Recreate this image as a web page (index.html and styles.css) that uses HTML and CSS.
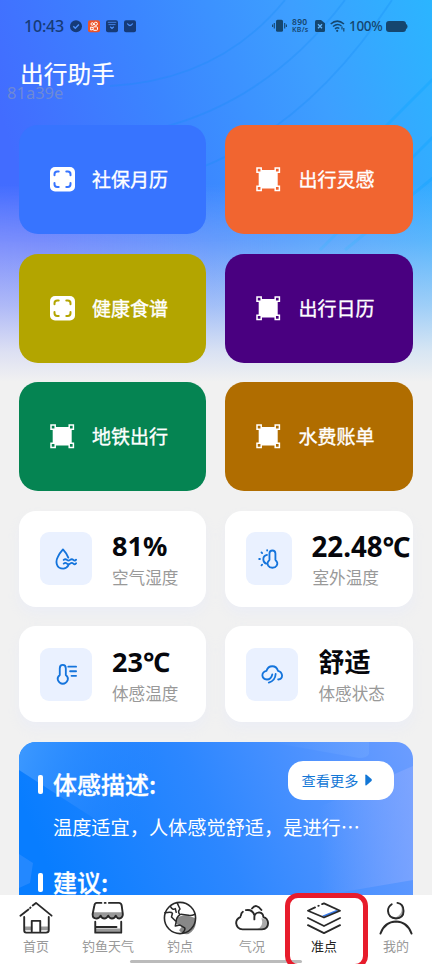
FILE: index.html
```html
<!DOCTYPE html>
<html lang="zh-CN">
<head>
<meta charset="utf-8">
<title>出行助手</title>
<link rel="stylesheet" href="styles.css">
</head>
<body>
<svg width="0" height="0" class="defs">
  <symbol id="scan" viewBox="0 0 25 25">
    <rect x="0" y="0" width="25" height="24.5" rx="5" fill="#fff"/>
    <path d="M4.5 8.2V7.2Q4.500 4.500 7.200 4.500H8.700M16.300 4.500h1.500q2.700 0 2.700 2.700V8.200M20.500 16v1.300q0 2.700-2.700 2.700H16.300M8.700 20H7.200Q4.500 20 4.500 17.300V16" fill="none" stroke="currentColor" stroke-width="2" stroke-linecap="round"/>
  </symbol>
  <symbol id="frame" viewBox="0 0 25 25">
    <rect x="2.700" y="3" width="19" height="18.500" fill="#fff"/>
    <g fill="currentColor" stroke="#fff" stroke-width="1.500"><path d="M1 1h4.200v4.200h-4.200zM19.200 1h4.200v4.200h-4.200zM1 19.200h4.200v4.200h-4.200zM19.200 19.200h4.200v4.200h-4.200z"/></g>
  </symbol>
</svg>
<div class="app">
  <svg class="backdrop" viewBox="0 0 432 382">
    <defs>
      <linearGradient id="sky" x1="0" y1="0.300" x2="1" y2="0">
        <stop offset="0" stop-color="#426cff"/><stop offset=".35" stop-color="#3b85ff"/><stop offset=".7" stop-color="#3d9fff"/><stop offset="1" stop-color="#2bb5ff"/>
      </linearGradient>
      <linearGradient id="fade" x1="0" y1="0" x2="0" y2="1">
        <stop offset=".48" stop-color="#f1f1f1" stop-opacity="0"/><stop offset=".63" stop-color="#f1f1f1" stop-opacity=".2"/><stop offset=".8" stop-color="#f1f1f1" stop-opacity=".55"/><stop offset=".92" stop-color="#f1f1f1" stop-opacity=".86"/><stop offset="1" stop-color="#f1f1f1"/>
      </linearGradient>
      <linearGradient id="violet" x1="0" y1="0" x2="1" y2="0"><stop offset="0" stop-color="#a18cff" stop-opacity=".3"/><stop offset="1" stop-color="#a18cff" stop-opacity="0"/></linearGradient>
      <linearGradient id="down" x1="0" y1="0" x2="0" y2="1"><stop offset="0" stop-color="#000"/><stop offset=".3" stop-color="#fff"/></linearGradient>
      <mask id="m"><rect y="185" width="300" height="197" fill="url(#down)"/></mask>
    </defs>
    <rect width="432" height="382" fill="url(#sky)"/>
    <g fill="none" stroke="#168cf5" stroke-opacity=".3" stroke-width="1.800">
      <path d="M110 86Q220 80 285 0M160 128Q270 100 345 0M200 168Q310 125 392 0"/>
      <path d="M380 132L440 72M320 250L440 130M345 250L440 172" stroke="#08a2ff" stroke-width="3"/>
    </g>
    <rect y="185" width="300" height="197" fill="url(#violet)" mask="url(#m)"/>
    <rect width="432" height="382" fill="url(#fade)"/>
  </svg>

  <header class="status">
    <span class="clock">10:43</span>
    <svg class="status-left" width="66" height="13" viewBox="0 0 66 13">
      <circle cx="6" cy="6.300" r="6" fill="#163b78"/><path d="M3.300 6.200l2 2 3.600-3.600" stroke="#4b91ff" stroke-width="1.400" fill="none"/>
      <rect x="18" y=".3" width="12" height="12" rx="2" fill="#ed5428"/>
      <g fill="none" stroke="#fff" stroke-width="1"><circle cx="22.300" cy="4" r="1.300"/><circle cx="25.800" cy="3.800" r="1.600"/><rect x="23.200" y="6.800" width="4.300" height="3.500" rx=".8"/><path d="M23 7.500l-2.300-.5v3l2.300-.5"/></g>
      <rect x="36" y=".3" width="12" height="12" rx="2" fill="#163b78"/><path d="M37.800 2.300h8.500M38.500 4.600h7" stroke="#4b91ff" stroke-width=".8"/><path d="M40.200 6.800l1.800 1.600 1.800-1.600" stroke="#4b91ff" stroke-width="1.200" fill="none"/>
      <rect x="54" y=".3" width="12" height="12" rx="2" fill="#163b78"/><path d="M57.300 3.500q2.700 4 5.400 0" stroke="#4b91ff" stroke-width="1.300" fill="none"/>
    </svg>
    <div class="status-right">
      <svg width="15" height="14" viewBox="0 0 15 14"><rect x="4" y=".7" width="7" height="12" rx="1.500" fill="#15466f"/><path d="M2.300 4v5.500M.6 5.500v2.500M12.700 4v5.500M14.400 5.500v2.500" stroke="#15466f" stroke-width="1.100"/></svg>
      <span class="speed"><span>890</span><span class="unit">KB/s</span></span>
      <svg class="sim" width="10" height="12" viewBox="0 0 10 12"><path d="M1.500 0H6L10 3.300V10.500Q10 12 8.500 12h-7Q0 12 0 10.500v-9Q0 0 1.500 0z" fill="#15466f"/><path d="M3 4.300l4 4M7 4.300l-4 4" stroke="#62b6ff" stroke-width="1.300"/></svg>
      <svg class="wifi" width="15" height="12" viewBox="0 0 15 12"><path d="M.7 4Q7.300-1.800 14 4M3 6.500Q7.500 2.800 11.500 6M5 8.900Q7.300 7 9.300 8.500" fill="none" stroke="#15466f" stroke-width="1.500"/><circle cx="7.200" cy="10.800" r="1.100" fill="#15466f"/><path d="M12 6.500v3M13.800 8v3.500" stroke="#15466f" stroke-width="1.200"/></svg>
      <span class="percent">100%</span>
      <svg class="battery" width="22" height="11" viewBox="0 0 22 11"><rect width="20" height="11" rx="3" fill="#15466f"/><path d="M20 3q1.500.3 1.500 2.500T20 8z" fill="#15466f"/></svg>
    </div>
  </header>
  <h1 class="title">出行助手</h1>
  <span class="watermark">81a39e</span>

  <main class="content">
    <section class="grid tiles">
      <a class="tile blue"><svg><use href="#scan"/></svg><span>社保月历</span></a>
      <a class="tile orange"><svg><use href="#frame"/></svg><span>出行灵感</span></a>
      <a class="tile olive"><svg><use href="#scan"/></svg><span>健康食谱</span></a>
      <a class="tile indigo"><svg><use href="#frame"/></svg><span>出行日历</span></a>
      <a class="tile green"><svg><use href="#frame"/></svg><span>地铁出行</span></a>
      <a class="tile brown"><svg><use href="#frame"/></svg><span>水费账单</span></a>
    </section>
    <section class="grid stats">
      <div class="stat">
        <div class="badge"><svg viewBox="0 0 24 24"><path d="M14.500 19.200Q12.500 22.500 9 22.500C1 22.500 .5 14.500 3 10Q5 5.500 8.700 1.500Q12.500 5.500 14.500 10.500"/><path d="M9.500 13q1.800-1.600 3.500 0t3.500 0 3.500 0 3-.3M9.500 17q1.800-1.600 3.500 0t3.500 0 3.500 0 3-.3"/></svg></div>
        <div class="reading"><strong>81%</strong><span>空气湿度</span></div>
      </div>
      <div class="stat">
        <div class="badge narrow"><svg viewBox="0 0 24 24"><path d="M12.500 13V6q0-3.300 3.200-3.300T19 6v7q3.200 3 1.500 6-1.600 2.500-4.800 2.500T11 19q-1.700-3 1.500-6zM9.800 7.500q-4 1-4 4.700 0 3.500 3 4.800"/><path d="M10 2.300v.5M3.800 4.800L4.500 5.500M1.300 12h.8M3.800 18.900L4.500 18.200"/></svg></div>
        <div class="reading"><strong class="long">22.48℃</strong><span>室外温度</span></div>
      </div>
      <div class="stat">
        <div class="badge"><svg viewBox="0 0 24 24"><path d="M5.200 13V6q0-3.900 3.300-3.900T11.800 6v7q3.200 2.500 2 5.700Q12.200 22.600 8.500 22.600T3.200 18.700Q2 15.500 5.200 13zM14.500 4h8.500M16.500 9h6.500M18 14h5"/></svg></div>
        <div class="reading"><strong>23℃</strong><span>体感温度</span></div>
      </div>
      <div class="stat">
        <div class="badge"><svg viewBox="0 0 24 24"><path d="M12.300 12.500Q11 18 6.500 18 1.800 17.500 1.500 13.500 1.500 9.500 6 8.500 7.500 3.500 12.300 3.500t6.200 5q4 1 4.500 5 0 4-4.300 4.500M16 12Q15.500 19.500 8.500 21.300"/></svg></div>
        <div class="reading"><strong class="cn">舒适</strong><span>体感状态</span></div>
      </div>
    </section>
    <section class="advice">
      <svg class="advice-bg" viewBox="0 0 394 190" preserveAspectRatio="none">
        <defs>
          <linearGradient id="adv" x1="0" y1=".3" x2="1" y2=".1"><stop offset="0" stop-color="#087dff"/><stop offset=".45" stop-color="#2d87ff"/><stop offset="1" stop-color="#6a9cff"/></linearGradient>
          <linearGradient id="g1" gradientUnits="userSpaceOnUse" x1="0" y1="0" x2="130" y2="40"><stop offset="0" stop-color="#3d99ff"/><stop offset="1" stop-color="#3088ff" stop-opacity="0"/></linearGradient>
          <linearGradient id="g2" x1="0" y1="0" x2="1" y2="0"><stop offset="0" stop-color="#8aaaff" stop-opacity="0"/><stop offset="1" stop-color="#8aaaff" stop-opacity=".6"/></linearGradient>
          <linearGradient id="g3" x1="0" y1="0" x2="1" y2="0"><stop offset="0" stop-color="#72a9ff" stop-opacity="0"/><stop offset="1" stop-color="#72a9ff" stop-opacity=".45"/></linearGradient>
        </defs>
        <rect width="394" height="190" fill="url(#adv)"/>
        <path d="M0 0H200V157L0 28z" fill="url(#g1)"/>
        <path d="M0 112l14 9-3 20-11 5z" fill="#2f8dff" opacity=".7"/>
        <path d="M300 65L394 24V138L300 154z" fill="url(#g2)"/>
        <path d="M250 0h100v12q-2 4-10 4z" fill="url(#g3)"/>
      </svg>
      <div class="advice-head"><h2>体感描述:</h2><a class="more">查看更多<svg width="8" height="12" viewBox="0 0 8 12"><path d="M.3 1.300Q.3 0 1.500.8L6.500 5Q7.300 6 6.500 7L1.500 11.200Q.3 12 .3 10.700z"/></svg></a></div>
      <p>温度适宜，人体感觉舒适，是进行<span class="dots">⋯</span></p>
      <h2>建议:</h2>
    </section>
  </main>

  <nav class="tabs">
    <a><svg viewBox="0 0 36 36"><path d="M6 31h8v-4H6zM23 27h8v4h-8z" fill="#999" stroke="none"/><path d="M1.500 15.500L10 9M14.500 4.800L18 2l16.500 13.500M5.500 17v14q0 2.500 2 2.500h21q3 0 3-2.500V17M13.500 32V21h9v11M11.700 7.300l.5-.4"/></svg><span>首页</span></a>
    <a><svg viewBox="0 0 36 36"><path d="M2 12h32v4q-3 5-8 1-4 4-8 0-4 4-8 0Q5 20 2 15zM5 29h26v4H5z" fill="#999" stroke="none"/><path d="M11 2H6Q4 2 3.500 5L1.700 14q0 4.500 4 4.500 3 0 4.500-3 1 3 4 3 2.500 0 4-3 1.500 3 4 3 3 0 4-3 1.500 3 3.500 3 4-.5 4-4.500L32.500 5q-.4-3-3-3H19M14.500 2h1M4.500 22v11.500H32V22M4.500 27.500H27"/></svg><span>钓鱼天气</span></a>
    <a><svg viewBox="0 0 36 36"><path d="M14 19q3-4 11-4l9 3q3 11-7 17-6 1-10-4l3-4-6-3z" fill="#888" stroke="none"/><circle cx="18" cy="18" r="16.500" stroke-width="1.700"/><path stroke-width="1.600" d="M2 12.500q7-1.500 8 .5l-1 4 4 4M8 6q2 4 5 2l1 4M15 2l3 6.500q-3 3 0 6-4 3-4 7l-1 5 5-1 5 3q1 2-2 5M34 14q-5 2-7 1l-8-1"/></svg><span>钓点</span></a>
    <a><svg viewBox="0 0 36 36"><path d="M28 18q6 1 6 6t-5 6h-6q8-3 5-12z" fill="#aaa" stroke="none"/><path d="M5.500 17Q1.200 19 1.200 23.500 2 30 8 30H28.500Q35 29.500 35 23.500 34.500 18 30 17 30 12.500 25.500 12 21 12.500 20.500 16.500V19.500M6.200 15.500Q6.500 12.500 8.300 11.300M11.500 9.700Q18.500 8.500 20.500 15M18 8Q22.500 2 28 9.500"/></svg><span>气况</span></a>
    <a class="active"><svg viewBox="0 0 36 36"><path d="M16 15.500L31 9.500 34 10.500 18 17z" fill="#397be8" stroke="none"/><path stroke-width="1.900" d="M8.500 6.800L1 10.300l17 7.200 17-7.200L18 2.500l-2 .8M12 5.200l.5-.2M1 18l17 8.500L35 18M1 25.500L18 34l17-8.500"/></svg><span>准点</span></a>
    <a><svg viewBox="0 0 36 36"><path d="M23 4q4 10-7 14 7 2 10-4 2-5-3-10z" fill="#aaa" stroke="none"/><path d="M13.500 3.500Q9.500 6 9.500 10.500q.5 7.500 8.500 8 8-.5 8-8Q26 3 19.500 2M1.500 34.500Q6 22 18 21.700 30 22 34.500 34.500"/></svg><span>我的</span></a>
    <i class="home-bar"></i>
    <i class="marker"></i>
  </nav>
</div>
</body>
</html>
```

FILE: styles.css
```css
* { box-sizing: border-box; }
body { margin: 0; font-family: "Noto Sans", "Noto Sans CJK SC", sans-serif; }
h1, h2, p { margin: 0; }
.defs { position: absolute; }
.app { position: relative; width: 432px; height: 964px; overflow: hidden; background: #f1f1f1; display: flex; flex-direction: column; }
.backdrop { position: absolute; left: 0; top: 0; width: 432px; height: 382px; }
.status { position: relative; height: 52px; display: flex; align-items: center; padding: 0 24px; color: #163b78; }
.clock { font: 500 16px/20px "Noto Sans", sans-serif; width: 39px; margin-top: -1px; white-space: nowrap; letter-spacing: -.2px; }
.status-left { margin-left: 7px; }
.status-right { margin-left: auto; display: flex; align-items: center; color: #15466f; }
.speed { display: grid; grid-template-rows: 8px 8px; width: 19px; margin-left: 5px; font: 600 8.500px/8px "Noto Sans", sans-serif; letter-spacing: .3px; white-space: nowrap; }
.unit { font-size: 7px; }
.sim { margin-left: 4px; }
.wifi { margin-left: 5px; }
.percent { width: 34px; margin-left: 4px; font: 500 13.500px/18px "Noto Sans", sans-serif; letter-spacing: -.3px; white-space: nowrap; }
.battery { margin-left: 3px; }
.title { position: relative; z-index: 1; height: 44px; margin-left: 20px; color: #fff; font: 400 23.700px/42px "Noto Sans CJK SC", sans-serif; -webkit-text-stroke: .2px #fff; }
.watermark { position: absolute; left: 7px; top: 82px; font: 400 16.500px/22px "Noto Sans", sans-serif; color: rgba(125, 145, 200, .75); }
.content { position: relative; flex: 1; min-height: 0; overflow: hidden; padding: 29px 19px 0; display: flex; flex-direction: column; gap: 19.500px; }
.grid { display: grid; grid-template-columns: 187.300px 187.300px; gap: 19.500px 19.200px; flex: none; }
.tile { height: 109px; border-radius: 19px; display: flex; align-items: center; padding-left: 31px; gap: 17px; color: #3774ff; background: currentColor; }
.tile svg { width: 25px; height: 25px; }
.tile span { margin-top: -2px; color: #fff; font: 400 19px "Noto Sans CJK SC", sans-serif; -webkit-text-stroke: .35px #fff; white-space: nowrap; }
.orange { color: #f16530; }
.olive { color: #b3a500; }
.indigo { color: #490080; }
.green { color: #058452; }
.brown { color: #b06d00; }
.stat { height: 96px; border-radius: 17px; background: #fff; display: flex; align-items: center; padding-left: 21px; gap: 20px; box-shadow: 0 7px 12px rgba(225, 232, 255, .3); white-space: nowrap; }
.badge { flex: none; width: 52px; height: 53px; border-radius: 9px; background: #eaf1ff; display: grid; place-items: center; }
.badge.narrow { width: 46px; }
.badge svg { width: 22px; height: 22px; fill: none; stroke: #1474dc; stroke-width: 2; stroke-linecap: round; stroke-linejoin: round; }
.reading { display: flex; flex-direction: column; padding-top: 2px; }
.reading strong { height: 35px; font: 700 27px/34px "Noto Sans", "Noto Sans CJK SC", sans-serif; color: #06070c; }
.reading strong.long { font-size: 27.700px; margin-left: -1px; }
.reading strong.cn { font-size: 26px; }
.reading span { font: 400 16.600px/26px "Noto Sans CJK SC", sans-serif; color: #999; }
.advice { position: relative; flex: none; height: 190px; border-radius: 17px; overflow: hidden; padding: 19px 19px 0; color: #fff; }
.advice-bg { position: absolute; inset: 0; width: 100%; height: 100%; }
.advice-head { position: relative; display: flex; justify-content: space-between; height: 46px; }
.advice h2 { position: relative; display: flex; align-items: center; height: 46px; gap: 10px; font: 500 24px/45px "Noto Sans CJK SC", sans-serif; -webkit-text-stroke: .3px #fff; }
.advice h2::before { content: ""; width: 5px; height: 19px; margin-top: 2px; border-radius: 2px; background: #fff; }
.more { width: 106px; height: 39px; border-radius: 15px; background: #fff; color: #1377d6; display: flex; align-items: center; justify-content: center; padding-right: 7px; gap: 7px; font: 400 14.200px/36px "Noto Sans CJK SC", sans-serif; }
.more svg { fill: #1377d6; }
.advice p { position: relative; height: 52px; padding-left: 15px; font: 400 19.200px/40px "Noto Sans CJK SC", sans-serif; white-space: nowrap; }
.tabs { position: relative; flex: none; height: 69px; background: #fff; display: grid; grid-template-columns: repeat(6, 72px); }
.tabs a { display: flex; flex-direction: column; align-items: center; padding-top: 6px; font: 400 13px/20px "Noto Sans CJK SC", sans-serif; color: #999; }
.tabs svg { width: 34px; height: 34px; margin-bottom: 1px; fill: none; stroke: #292929; stroke-width: 2; stroke-linecap: round; stroke-linejoin: round; }
.tabs .active { color: #222; }
.home-bar { position: absolute; left: 130px; top: 65px; width: 172px; height: 3px; border-radius: 2px; background: #bbb; }
.marker { position: absolute; left: 285px; top: -2px; width: 83px; height: 76px; border: 5px solid #e71c2c; border-radius: 13px; }
```
